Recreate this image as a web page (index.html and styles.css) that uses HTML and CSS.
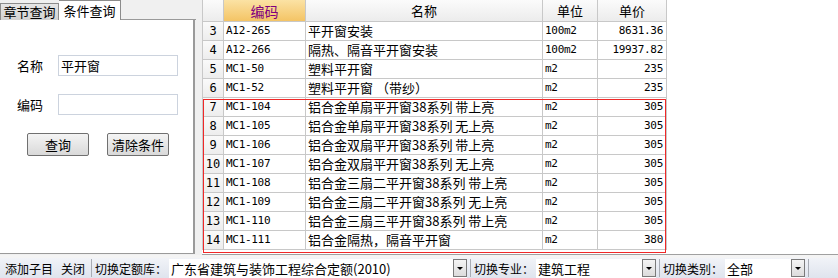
FILE: index.html
```html
<!DOCTYPE html>
<html lang="zh-CN">
<head>
    <meta charset="UTF-8">
    <title>定额查询</title>
    <link rel="stylesheet" href="styles.css">
</head>
<body>
    <div class="main">
        <div class="left">
            <div class="tabs">
                <div class="tab">章节查询</div>
                <div class="tab active">条件查询</div>
                <div class="tab-rest"></div>
            </div>
            <div class="panel">
                <div class="field">
                    <label for="q-name">名称</label>
                    <input type="text" id="q-name" value="平开窗">
                </div>
                <div class="field">
                    <label for="q-code">编码</label>
                    <input type="text" id="q-code" value="">
                </div>
                <div class="buttons">
                    <button type="button">查询</button>
                    <button type="button">清除条件</button>
                </div>
            </div>
        </div>
        <div class="splitter"></div>
        <div class="grid-wrap">
            <table class="grid">
                <thead>
                    <tr>
                        <th class="c-no"></th>
                        <th class="c-code sorted">编码</th>
                        <th class="c-name">名称</th>
                        <th class="c-unit">单位</th>
                        <th class="c-price">单价</th>
                    </tr>
                </thead>
                <tbody>
                    <tr><td class="c-no">3</td><td class="mono">A12-265</td><td>平开窗安装</td><td class="mono">100m2</td><td class="mono num">8631.36</td></tr>
                    <tr><td class="c-no">4</td><td class="mono">A12-266</td><td>隔热、隔音平开窗安装</td><td class="mono">100m2</td><td class="mono num">19937.82</td></tr>
                    <tr><td class="c-no">5</td><td class="mono">MC1-50</td><td>塑料平开窗</td><td class="mono">m2</td><td class="mono num">235</td></tr>
                    <tr><td class="c-no">6</td><td class="mono">MC1-52</td><td>塑料平开窗 （带纱）</td><td class="mono">m2</td><td class="mono num">235</td></tr>
                    <tr><td class="c-no">7</td><td class="mono">MC1-104</td><td>铝合金单扇平开窗38系列 带上亮</td><td class="mono">m2</td><td class="mono num">305</td></tr>
                    <tr><td class="c-no">8</td><td class="mono">MC1-105</td><td>铝合金单扇平开窗38系列 无上亮</td><td class="mono">m2</td><td class="mono num">305</td></tr>
                    <tr><td class="c-no">9</td><td class="mono">MC1-106</td><td>铝合金双扇平开窗38系列 带上亮</td><td class="mono">m2</td><td class="mono num">305</td></tr>
                    <tr><td class="c-no">10</td><td class="mono">MC1-107</td><td>铝合金双扇平开窗38系列 无上亮</td><td class="mono">m2</td><td class="mono num">305</td></tr>
                    <tr><td class="c-no">11</td><td class="mono">MC1-108</td><td>铝合金三扇二平开窗38系列 带上亮</td><td class="mono">m2</td><td class="mono num">305</td></tr>
                    <tr><td class="c-no">12</td><td class="mono">MC1-109</td><td>铝合金三扇二平开窗38系列 无上亮</td><td class="mono">m2</td><td class="mono num">305</td></tr>
                    <tr><td class="c-no">13</td><td class="mono">MC1-110</td><td>铝合金三扇三平开窗38系列 带上亮</td><td class="mono">m2</td><td class="mono num">305</td></tr>
                    <tr><td class="c-no">14</td><td class="mono">MC1-111</td><td>铝合金隔热，隔音平开窗</td><td class="mono">m2</td><td class="mono num">380</td></tr>
                </tbody>
            </table>
            <div class="selection"></div>
        </div>
    </div>
    <div class="strip"></div>
    <div class="toolbar">
        <span class="tool">添加子目</span>
        <span class="tool">关闭</span>
        <span class="sep"></span>
        <span class="tool">切换定额库：</span>
        <div class="combo combo-lib"><span>广东省建筑与装饰工程综合定额(2010)</span><i class="drop"></i></div>
        <span class="sep"></span>
        <span class="tool">切换专业：</span>
        <div class="combo combo-major"><span>建筑工程</span><i class="drop"></i></div>
        <span class="sep"></span>
        <span class="tool">切换类别：</span>
        <div class="combo combo-type"><span>全部</span><i class="drop"></i></div>
        <span class="sep"></span>
    </div>
</body>
</html>
```
FILE: styles.css
```css
body {
    margin: 0;
    width: 838px;
    height: 278px;
    overflow: hidden;
    background-color: #fff;
    font-family: "Noto Sans CJK SC", "Liberation Sans", sans-serif;
    font-size: 12px;
    color: #000;
}

.main {
    display: flex;
    height: 255px;
}

/* 左侧查询面板 */
.left {
    width: 196px;
    display: flex;
    flex-direction: column;
    background-color: #f0f0f0;
}

.tabs {
    display: flex;
    align-items: flex-end;
    height: 20px;
}

.tab {
    box-sizing: border-box;
    height: 17px;
    width: 59px;
    line-height: 15px;
    font-size: 13px;
    text-align: center;
    border: 1px solid #8c8c8c;
    border-bottom: none;
    background: linear-gradient(#e6e6e6, #d2d2d2);
}

.tab.active {
    height: 20px;
    width: 62px;
    line-height: 19px;
    background: #fff;
    border-left: none;
}

.tab-rest {
    flex: 1;
    height: 20px;
    border-bottom: 1px solid #9a9a9a;
    box-sizing: border-box;
}

.panel {
    height: 234px;
    box-sizing: border-box;
    background: #fff;
    border-right: 2px solid #9a9a9a;
    border-bottom: 1px solid #9a9a9a;
    margin-right: 1px;
    padding-top: 35px;
}

.field {
    display: flex;
    align-items: center;
    height: 20px;
    margin-bottom: 19px;
}

.field label {
    width: 41px;
    padding-left: 17px;
    font-size: 13px;
}

.field input {
    box-sizing: border-box;
    width: 120px;
    height: 21px;
    border: 1px solid #ccd3de;
    padding: 0 2px;
    font-family: "Noto Sans CJK SC", sans-serif;
    font-size: 13px;
}

.buttons {
    display: flex;
    gap: 18px;
    padding-left: 27px;
    margin-top: 11px;
}

.buttons button {
    width: 62px;
    height: 23px;
    padding: 0;
    border: 1px solid #707070;
    border-radius: 2px;
    background: linear-gradient(#f4f4f4, #d9d9d9);
    font-family: "Noto Sans CJK SC", sans-serif;
    font-size: 13px;
}

.splitter {
    width: 6px;
    background-color: #f0f0f0;
}

/* 定额列表 */
.grid-wrap {
    flex: 1;
    position: relative;
    border-bottom: 1px solid #a0a0a0;
}

.grid {
    border-collapse: separate;
    border-spacing: 0;
    table-layout: fixed;
    width: 464px;
}

.grid th {
    height: 21px;
    padding: 0;
    font-weight: normal;
    font-size: 13px;
    border-right: 1px solid #c8c8c8;
    border-bottom: 1px solid #c8c8c8;
    background: linear-gradient(#fbfbfb, #ececec);
}

.grid th.sorted {
    color: #800080;
    font-size: 14px;
    background: linear-gradient(#fbe2a4, #f4c465);
}

.grid td {
    height: 18px;
    padding: 0 0 0 2px;
    line-height: 18px;
    white-space: nowrap;
    overflow: hidden;
    font-size: 13px;
    border-right: 1px solid #c8c8c8;
    border-bottom: 1px solid #c8c8c8;
}

.grid .c-no {
    width: 20px;
    text-align: center;
    padding: 0;
    border-left: 1px solid #c8c8c8;
}

.grid td.c-no {
    background: linear-gradient(#fafafa, #ededed);
    font-family: "DejaVu Sans Mono", monospace;
    font-size: 12px;
}

.grid .c-code { width: 81px; }
.grid .c-name { width: 236px; }
.grid .c-unit { width: 54px; }
.grid .c-price { width: 68px; }

.grid td.mono {
    font-family: "DejaVu Sans Mono", monospace;
    font-size: 11px;
    letter-spacing: -0.3px;
}

.grid td.num {
    text-align: right;
    padding: 0 3px 0 0;
}

/* 选中区域 */
.selection {
    position: absolute;
    z-index: 2;
    left: 1px;
    top: 99px;
    width: 463px;
    height: 154px;
    box-sizing: border-box;
    border: 1px solid rgb(240, 40, 40);
    pointer-events: none;
}

.strip {
    height: 3px;
    background-color: #f4f4f4;
}

/* 底部工具栏 */
.toolbar {
    display: flex;
    align-items: center;
    height: 20px;
    padding-left: 5px;
    background: linear-gradient(#f1f3f8, #dfe4ee);
}

.tool {
    margin-right: 8px;
    white-space: nowrap;
}

.sep {
    width: 1px;
    height: 18px;
    background-color: #a8acb4;
    margin-right: 3px;
    margin-left: -2px;
}

.combo {
    display: flex;
    align-items: center;
    height: 19px;
    background: #fff;
    margin-left: -6px;
    margin-right: 5px;
    padding-left: 2px;
    box-sizing: border-box;
}

.combo span {
    flex: 1;
    white-space: nowrap;
    font-size: 13px;
}

.combo-lib { width: 298px; }
.combo-major { width: 120px; }
.combo-type { width: 80px; }

.drop {
    position: relative;
    width: 12px;
    height: 16px;
    border: 1px solid #7a7a7a;
    background: linear-gradient(#f4f4f4, #dcdcdc);
}

.drop::after {
    content: "";
    position: absolute;
    left: 3px;
    top: 7px;
    border-left: 3px solid transparent;
    border-right: 3px solid transparent;
    border-top: 3px solid #000;
}
```
